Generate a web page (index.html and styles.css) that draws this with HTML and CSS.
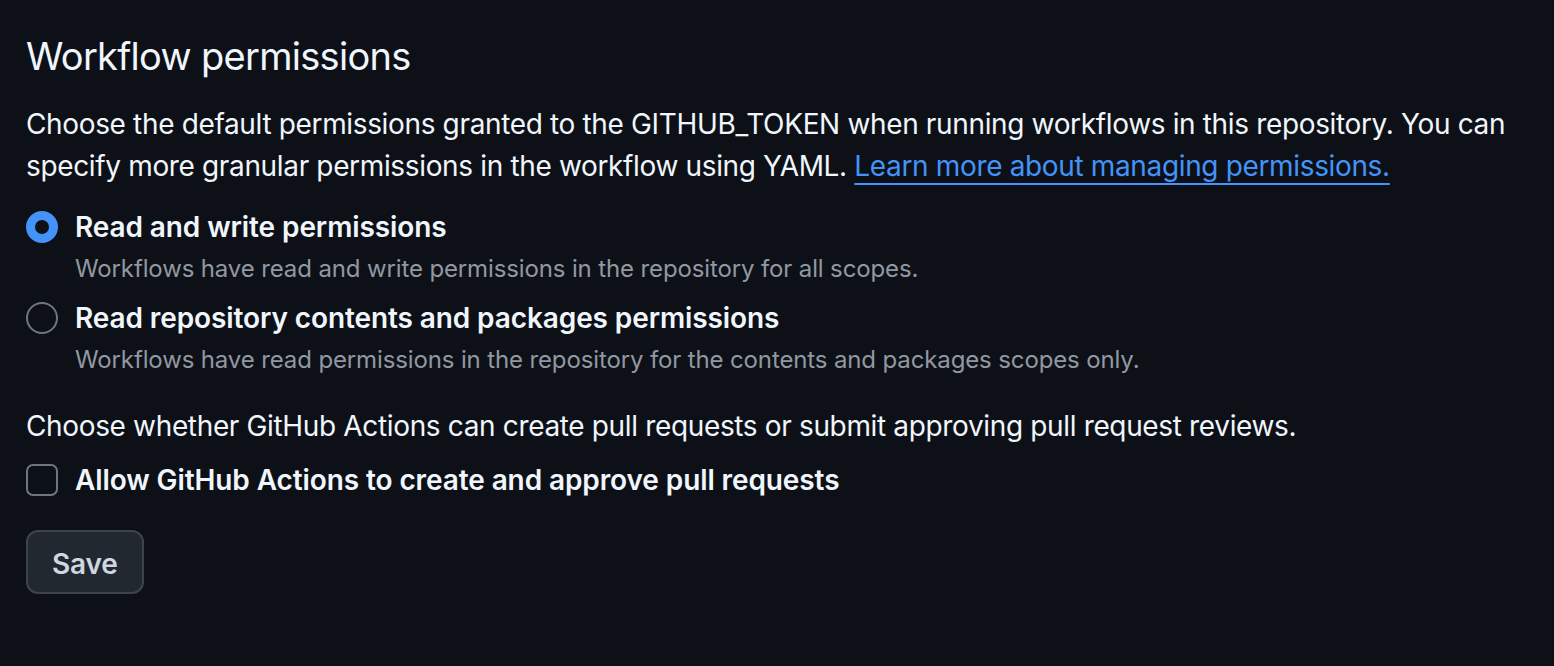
FILE: index.html
```html
<!DOCTYPE html>
<html lang="en">
<head>
<meta charset="utf-8">
<title>Workflow permissions</title>
<link rel="stylesheet" href="styles.css">
</head>
<body>
<main class="page">
  <h2 class="title">Workflow permissions</h2>
  <p class="lead">Choose the default permissions granted to the GITHUB_TOKEN when running workflows in this repository. You can specify more granular permissions in the workflow using YAML. <a class="link" href="#">Learn more about managing permissions.</a></p>

  <div class="options">
    <label class="option">
      <span class="radio radio-checked"></span>
      <span class="option-body">
        <span class="option-label">Read and write permissions</span>
        <span class="option-note">Workflows have read and write permissions in the repository for all scopes.</span>
      </span>
    </label>
    <label class="option">
      <span class="radio"></span>
      <span class="option-body">
        <span class="option-label">Read repository contents and packages permissions</span>
        <span class="option-note">Workflows have read permissions in the repository for the contents and packages scopes only.</span>
      </span>
    </label>
  </div>

  <p class="lead second">Choose whether GitHub Actions can create pull requests or submit approving pull request reviews.</p>

  <label class="option check-row">
    <span class="checkbox"></span>
    <span class="option-label">Allow GitHub Actions to create and approve pull requests</span>
  </label>

  <button class="btn" type="button">Save</button>
</main>
</body>
</html>
```

FILE: styles.css
```css
html, body {
  margin: 0;
  padding: 0;
  background: #0d1117;
}

body {
  font-family: Inter, "Noto Sans", "Liberation Sans", sans-serif;
  color: #f0f6fc;
}

.page {
  padding: 26px 26px 0 26px;
  display: flex;
  flex-direction: column;
  align-items: flex-start;
}

.title {
  margin: 0;
  font-size: 38px;
  line-height: 60px;
  font-weight: 400;
  letter-spacing: -0.7px;
  color: #f0f6fc;
}

.lead {
  margin: 17px 0 0 0;
  font-size: 28px;
  line-height: 42px;
  letter-spacing: -0.35px;
  color: #f0f6fc;
}

.link {
  color: #4493f8;
  text-decoration: underline;
  text-underline-offset: 7px;
  text-decoration-thickness: 2px;
}

.options {
  display: flex;
  flex-direction: column;
  gap: 7px;
  margin-top: 19px;
}

.option {
  display: flex;
  align-items: flex-start;
  gap: 17px;
}

.option-body {
  display: flex;
  flex-direction: column;
}

.option-label {
  font-size: 28px;
  line-height: 42px;
  font-weight: 600;
  letter-spacing: -0.1px;
  color: #f0f6fc;
}

.option-note {
  font-size: 24px;
  line-height: 42px;
  letter-spacing: -0.13px;
  color: #9198a1;
}

.radio {
  box-sizing: border-box;
  width: 32px;
  height: 32px;
  margin-top: 5px;
  border-radius: 50%;
  border: 2px solid #6e7681;
  flex: none;
}

.radio-checked {
  border: 9px solid #4493f8;
}

.second {
  margin-top: 24px;
}

.check-row {
  margin-top: 12px;
}

.checkbox {
  box-sizing: border-box;
  width: 32px;
  height: 32px;
  margin-top: 5px;
  border-radius: 7px;
  border: 2px solid #6e7681;
  flex: none;
}

.btn {
  margin-top: 29px;
  box-sizing: border-box;
  height: 64px;
  padding: 3px 24px 0 24px;
  font-family: inherit;
  font-size: 28px;
  font-weight: 600;
  letter-spacing: -0.2px;
  color: #d1d7e0;
  background: #212830;
  border: 2px solid #3d444d;
  border-radius: 12px;
}
```
